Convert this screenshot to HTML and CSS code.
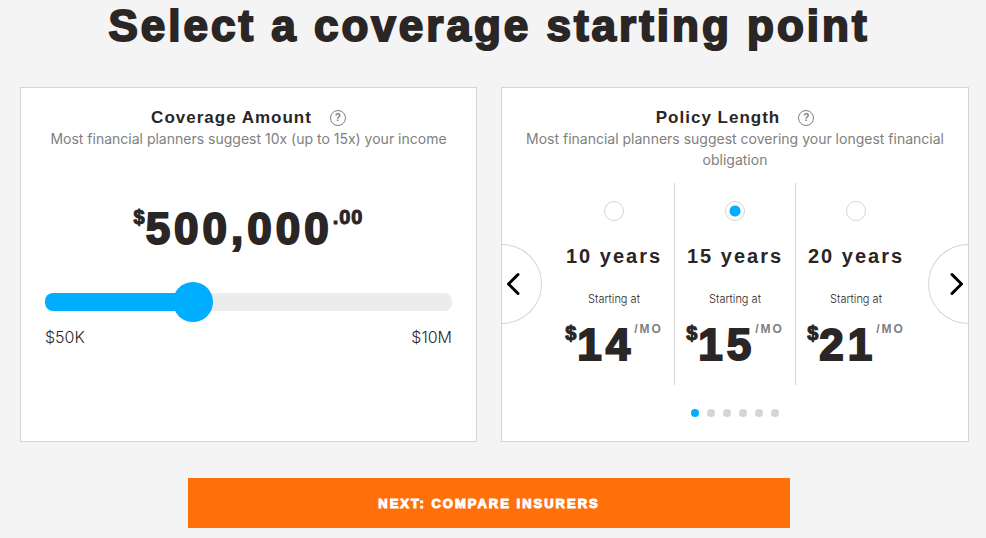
FILE: index.html
```
<!DOCTYPE html>
<html lang="en">

<head>
    <meta charset="UTF-8">
    <meta name="viewport" content="width=device-width, initial-scale=1.0">
    <title>Select a coverage starting point</title>
    <link rel="stylesheet" href="styles.css">
</head>

<body>
    <main class="page">
        <h1>Select a coverage starting point</h1>

        <div class="cards">
            <section class="card">
                <div class="card-title">
                    <h2 id="amount-title">Coverage Amount</h2>
                    <button type="button" class="help" aria-label="About coverage amount">?</button>
                </div>
                <p class="hint">Most financial planners suggest 10x (up to 15x) your income</p>
                <div class="amount">
                    <span class="currency">$</span>
                    <span class="number">500,000</span>
                    <span class="cents">.00</span>
                </div>
                <input type="range" class="slider" min="0" max="100" value="35" aria-labelledby="amount-title">
                <div class="range-labels">
                    <span>$50K</span>
                    <span>$10M</span>
                </div>
            </section>

            <section class="card">
                <div class="card-title">
                    <h2>Policy Length</h2>
                    <button type="button" class="help" aria-label="About policy length">?</button>
                </div>
                <p class="hint">Most financial planners suggest covering your longest financial obligation</p>
                <div class="carousel">
                    <button type="button" class="arrow prev" aria-label="Previous">
                        <svg width="14" height="24" viewBox="0 0 14 24"><path d="M12 2.500L2.500 12L12 21.500"/></svg>
                    </button>
                    <div class="plans">
                        <label class="plan" for="years10">
                            <input type="radio" name="years" id="years10">
                            <span class="years">10 years</span>
                            <span class="starting">Starting at</span>
                            <span class="price">
                                <span class="currency">$</span>
                                <span class="number">14</span>
                                <span class="month">/MO</span>
                            </span>
                        </label>
                        <label class="plan" for="years15">
                            <input type="radio" name="years" id="years15" checked>
                            <span class="years">15 years</span>
                            <span class="starting">Starting at</span>
                            <span class="price">
                                <span class="currency">$</span>
                                <span class="number">15</span>
                                <span class="month">/MO</span>
                            </span>
                        </label>
                        <label class="plan" for="years20">
                            <input type="radio" name="years" id="years20">
                            <span class="years">20 years</span>
                            <span class="starting">Starting at</span>
                            <span class="price">
                                <span class="currency">$</span>
                                <span class="number">21</span>
                                <span class="month">/MO</span>
                            </span>
                        </label>
                    </div>
                    <button type="button" class="arrow next" aria-label="Next">
                        <svg width="14" height="24" viewBox="0 0 14 24"><path d="M2 2.500L11.500 12L2 21.500"/></svg>
                    </button>
                </div>
                <div class="dots">
                    <span class="dot active"></span>
                    <span class="dot"></span>
                    <span class="dot"></span>
                    <span class="dot"></span>
                    <span class="dot"></span>
                    <span class="dot"></span>
                </div>
            </section>
        </div>

        <button type="button" class="submit">NEXT: COMPARE INSURERS</button>
    </main>
</body>

</html>
```
FILE: styles.css
```
* {
    box-sizing: border-box;
}

body {
    margin: 0;
    background-color: #f4f4f4;
    color: #2b2626;
    font-family: Inter, sans-serif;
}

button {
    padding: 0;
    cursor: pointer;
}

h1,
h2,
p {
    margin: 0;
}

h1,
h2,
.amount,
.years,
.price,
.submit {
    font-family: "Liberation Sans", Arial, sans-serif;
    font-weight: 900;
}

.page {
    display: flex;
    flex-direction: column;
    align-items: center;
    padding: 0 8px 10px 0;
}

h1 {
    font-size: 44px;
    line-height: 52px;
    letter-spacing: 3px;
    text-align: center;
    -webkit-text-stroke: 2px;
}

.cards {
    display: grid;
    grid-template-columns: 457fr 468fr;
    gap: 24px;
    align-self: stretch;
    margin: 35px 9px 36px 20px;
}

.card {
    background-color: #fff;
    border: 1px solid #d5d5d5;
    padding-top: 20px;
    padding-bottom: 24px;
}

.card-title {
    display: flex;
    justify-content: center;
    align-items: center;
    gap: 18px;
}

h2 {
    font-size: 17px;
    line-height: 20px;
    letter-spacing: 1px;
}

.help {
    width: 16px;
    height: 16px;
    border: 1px solid #808080;
    border-radius: 50%;
    background: none;
    color: #808080;
    font: bold 10px/14px "Liberation Sans", Arial, sans-serif;
}

.hint {
    padding: 0 20px;
    font-size: 14px;
    line-height: 21px;
    text-align: center;
    color: #808080;
}

.amount,
.price {
    display: flex;
    justify-content: center;
    align-items: flex-start;
}

.amount {
    margin-top: 56px;
}

.number {
    font-size: 44px;
    line-height: 48px;
    letter-spacing: 4px;
    -webkit-text-stroke: 2px;
}

.currency,
.cents {
    font-size: 20px;
    line-height: 24px;
    letter-spacing: 1px;
    -webkit-text-stroke: 1px;
}

.slider {
    appearance: none;
    display: block;
    width: calc(100% - 48px);
    height: 40px;
    margin: 29px 24px 5px;
    background: none;
}

.slider::-webkit-slider-runnable-track {
    height: 18px;
    border-radius: 8px;
    background: linear-gradient(to right, #00aeff 36%, #ececec 36%);
}

.slider::-webkit-slider-thumb {
    appearance: none;
    width: 40px;
    height: 40px;
    margin-top: -11px;
    border-radius: 50%;
    background-color: #00aeff;
}

.range-labels {
    display: flex;
    justify-content: space-between;
    padding: 0 24px;
    font-size: 16px;
    font-weight: 300;
    line-height: 20px;
}

.carousel {
    display: flex;
    align-items: center;
    justify-content: space-between;
    gap: 12px;
    margin-top: 13px;
}

.arrow {
    display: flex;
    align-items: center;
    width: 40px;
    height: 80px;
    border: 1px solid #d5d5d5;
    background-color: #fff;
}

.arrow path {
    fill: none;
    stroke: #000;
    stroke-width: 3;
    stroke-linecap: round;
    stroke-linejoin: round;
}

.prev {
    padding-left: 4px;
    border-left: 0;
    border-radius: 0 40px 40px 0;
}

.next {
    justify-content: flex-end;
    padding-right: 4px;
    border-right: 0;
    border-radius: 40px 0 0 40px;
}

.plans {
    display: flex;
    flex: 1;
}

.plan {
    display: flex;
    flex: 1;
    flex-direction: column;
    align-items: center;
    padding: 18px 0 16px;
    cursor: pointer;
}

.plan + .plan {
    border-left: 1px solid #d5d5d5;
}

.plan input {
    appearance: none;
    width: 20px;
    height: 20px;
    margin: 0 0 23px;
    border: 1px solid #d5d5d5;
    border-radius: 50%;
}

.plan input:checked {
    background: radial-gradient(circle, #00aeff 5px, #fff 6px);
}

.years {
    font-size: 20px;
    line-height: 24px;
    letter-spacing: 2px;
}

.starting {
    margin: 22px 0 13px;
    font-size: 11px;
    font-weight: 300;
    line-height: 18px;
}

.month {
    font-size: 12px;
    line-height: 16px;
    letter-spacing: 2px;
    color: #808080;
}

.dots {
    display: flex;
    justify-content: center;
    gap: 8px;
    margin-top: 24px;
}

.dot {
    width: 8px;
    height: 8px;
    border-radius: 50%;
    background-color: #d5d5d5;
}

.active {
    background-color: #00aeff;
}

.submit {
    width: 100%;
    max-width: 602px;
    height: 50px;
    border: 0;
    background-color: #ff700a;
    color: #fff;
    font-size: 13px;
    letter-spacing: 2px;
    -webkit-text-stroke: 1px;
}
```
